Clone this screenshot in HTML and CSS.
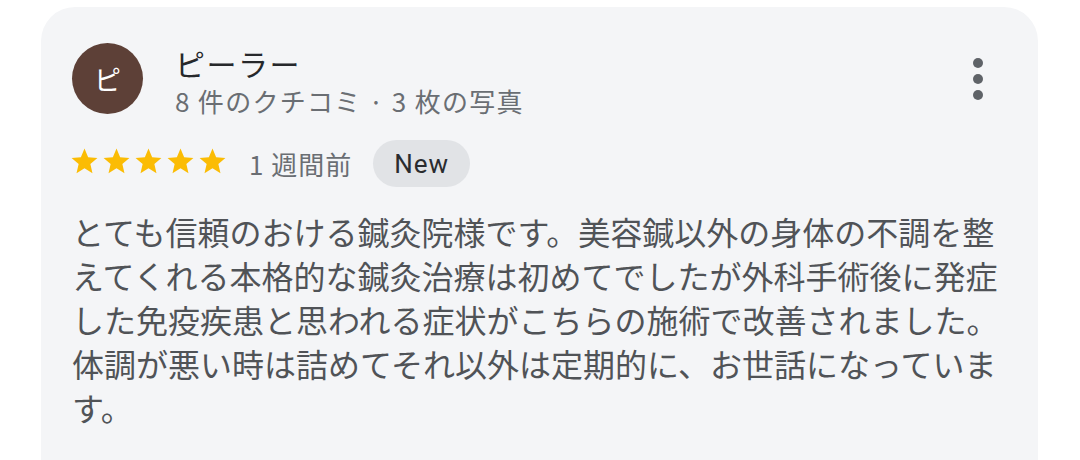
FILE: index.html
```html
<!DOCTYPE html>
<html lang="ja">
<head>
<meta charset="utf-8">
<link rel="stylesheet" href="styles.css">
</head>
<body>
<div class="card">
  <div class="header">
    <div class="avatar">ピ</div>
    <div class="who">
      <div class="name">ピーラー</div>
      <div class="meta">8 件のクチコミ · 3 枚の写真</div>
    </div>
    <div class="more" aria-label="その他"><span></span><span></span><span></span></div>
  </div>
  <div class="rating">
    <div class="stars">
      <svg viewBox="0 0 24 24"><path d="M12 17.27L18.18 21l-1.64-7.03L22 9.24l-7.19-.61L12 2 9.19 8.63 2 9.24l5.46 4.73L5.82 21z"/></svg>
      <svg viewBox="0 0 24 24"><path d="M12 17.27L18.18 21l-1.64-7.03L22 9.24l-7.19-.61L12 2 9.19 8.63 2 9.24l5.46 4.73L5.82 21z"/></svg>
      <svg viewBox="0 0 24 24"><path d="M12 17.27L18.18 21l-1.64-7.03L22 9.24l-7.19-.61L12 2 9.19 8.63 2 9.24l5.46 4.73L5.82 21z"/></svg>
      <svg viewBox="0 0 24 24"><path d="M12 17.27L18.18 21l-1.64-7.03L22 9.24l-7.19-.61L12 2 9.19 8.63 2 9.24l5.46 4.73L5.82 21z"/></svg>
      <svg viewBox="0 0 24 24"><path d="M12 17.27L18.18 21l-1.64-7.03L22 9.24l-7.19-.61L12 2 9.19 8.63 2 9.24l5.46 4.73L5.82 21z"/></svg>
    </div>
    <span class="when">1 週間前</span>
    <span class="chip">New</span>
  </div>
  <p class="body">とても信頼のおける鍼灸院様です。美容鍼以外の身体の不調を整えてくれる本格的な鍼灸治療は初めてでしたが外科手術後に発症した免疫疾患と思われる症状がこちらの施術で改善されました。体調が悪い時は詰めてそれ以外は定期的に、お世話になっています。</p>
</div>
</body>
</html>
```

FILE: styles.css
```css
* { box-sizing: border-box; }
html, body { margin: 0; padding: 0; background: #ffffff; }
body {
  font-family: "Noto Sans CJK JP", Roboto, sans-serif;
  width: 1080px;
  height: 460px;
  overflow: hidden;
  padding: 7px 42px 0 41px;
}
.card {
  background: #f4f5f7;
  border-radius: 34px 34px 0 0;
  height: 470px;
  padding: 36px 31px 0 31px;
}
.header {
  display: flex;
  align-items: flex-start;
}
.avatar {
  width: 71px;
  height: 71px;
  border-radius: 50%;
  background: #5d4037;
  color: #ffffff;
  font-size: 27px;
  display: flex;
  align-items: center;
  justify-content: center;
  flex: none;
}
.who {
  margin-left: 32px;
  flex: 1;
}
.name {
  font-size: 30px;
  line-height: 40px;
  color: #26282b;
  letter-spacing: 1.5px;
}
.meta {
  font-size: 26px;
  line-height: 36px;
  color: #6a6e73;
  letter-spacing: 1.3px;
}
.more {
  display: flex;
  flex-direction: column;
  gap: 6px;
  padding-top: 15px;
  margin-right: 24px;
}
.more span {
  width: 10px;
  height: 10px;
  border-radius: 50%;
  background: #5f6368;
}
.rating {
  display: flex;
  align-items: center;
  margin-top: 21px;
  height: 47px;
}
.stars {
  display: flex;
  gap: 1px;
  margin-left: -3px;
  margin-top: -5px;
}
.stars svg {
  width: 31px;
  height: 31px;
  fill: #fbbc04;
}
.when {
  font-size: 26px;
  color: #6a6e73;
  margin-left: 21px;
  letter-spacing: 1px;
}
.chip {
  margin-left: 21px;
  height: 47px;
  padding: 0 21px;
  border-radius: 24px;
  background: #e1e3e6;
  color: #2a2c2f;
  font-family: Roboto, "Noto Sans CJK JP", sans-serif;
  font-size: 26px;
  letter-spacing: 1px;
  display: flex;
  align-items: center;
}
.body {
  margin: 22px 0 0 0;
  font-size: 32px;
  line-height: 44px;
  color: #505357;
}
```
